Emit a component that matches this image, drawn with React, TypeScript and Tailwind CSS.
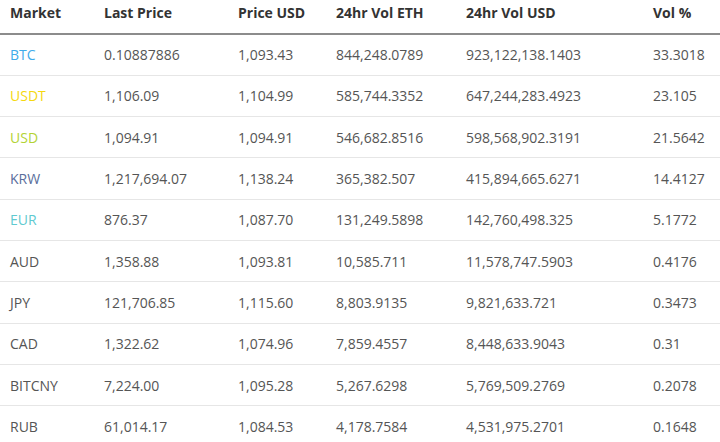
const rows: [string, string, string, string, string, string, string][] = [
  ['BTC', 'text-[#3fabea]', '0.10887886', '1,093.43', '844,248.0789', '923,122,138.1403', '33.3018'],
  ['USDT', 'text-[#f5d80f]', '1,106.09', '1,104.99', '585,744.3352', '647,244,283.4923', '23.105'],
  ['USD', 'text-[#b3d335]', '1,094.91', '1,094.91', '546,682.8516', '598,568,902.3191', '21.5642'],
  ['KRW', 'text-[#5b6e9c]', '1,217,694.07', '1,138.24', '365,382.507', '415,894,665.6271', '14.4127'],
  ['EUR', 'text-[#5fcad0]', '876.37', '1,087.70', '131,249.5898', '142,760,498.325', '5.1772'],
  ['AUD', 'text-[#555555]', '1,358.88', '1,093.81', '10,585.711', '11,578,747.5903', '0.4176'],
  ['JPY', 'text-[#555555]', '121,706.85', '1,115.60', '8,803.9135', '9,821,633.721', '0.3473'],
  ['CAD', 'text-[#555555]', '1,322.62', '1,074.96', '7,859.4557', '8,448,633.9043', '0.31'],
  ['BITCNY', 'text-[#555555]', '7,224.00', '1,095.28', '5,267.6298', '5,769,509.2769', '0.2078'],
  ['RUB', 'text-[#555555]', '61,014.17', '1,084.53', '4,178.7584', '4,531,975.2701', '0.1648'],
];

const headers = ['Market', 'Last Price', 'Price USD', '24hr Vol ETH', '24hr Vol USD', 'Vol %'];

export default function App() {
  return (
    <div className="w-[720px] h-[442px] overflow-hidden bg-white font-['Open_Sans',sans-serif]">
      <table className="w-full table-fixed border-collapse">
        <colgroup>
          <col className="w-[94px]" />
          <col className="w-[134px]" />
          <col className="w-[98px]" />
          <col className="w-[130px]" />
          <col className="w-[187px]" />
          <col className="w-[77px]" />
        </colgroup>
        <thead>
          <tr className="border-b-2 border-[#8c8c8c]">
            {headers.map((h) => (
              <th key={h} className="h-[34px] pl-[10px] pt-0 pb-[8px] text-left text-[14px] font-bold text-[#333333] align-middle">
                {h}
              </th>
            ))}
          </tr>
        </thead>
        <tbody>
          {rows.map(([market, color, ...vals]) => (
            <tr key={market} className="border-b border-[#e6e6e6]">
              <td className={`h-[41.3px] pl-[10px] text-[14px] ${color}`}>{market}</td>
              {vals.map((v, i) => (
                <td key={i} className="h-[41.3px] pl-[10px] text-[14px] text-[#555555]">
                  {v}
                </td>
              ))}
            </tr>
          ))}
        </tbody>
      </table>
    </div>
  );
}
